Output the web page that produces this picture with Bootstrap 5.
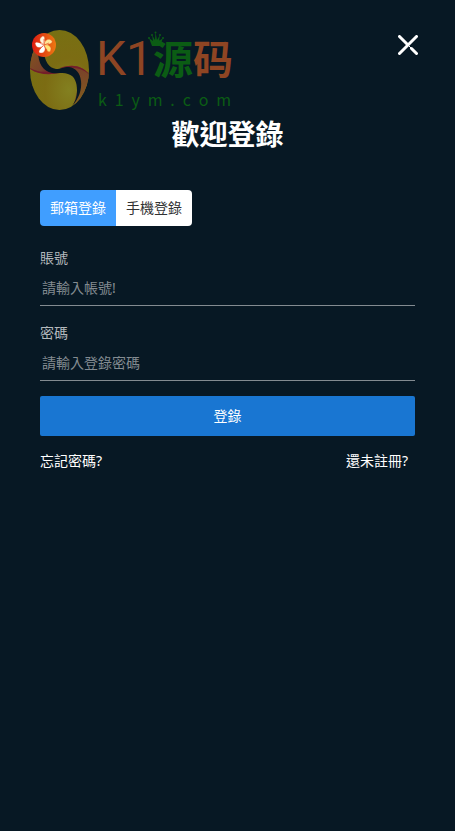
<!DOCTYPE html>
<html lang="zh-Hant">
<head>
<meta charset="utf-8">
<meta name="viewport" content="width=device-width, initial-scale=1">
<title>歡迎登錄</title>
<link href="https://cdn.jsdelivr.net/npm/bootstrap@5.3.0/dist/css/bootstrap.min.css" rel="stylesheet">
<style>
body{background:#071824;color:#fff;font-family:"Noto Sans","Noto Sans CJK TC",sans-serif;font-size:14px;line-height:20px}
.site-head{padding:30px 37px 0 30px}
.brand{width:202px;height:80px}
.egg{width:60px;height:80px}
.brand-text{padding-left:6px}
.brand-main{height:58px;line-height:58px;font-family:"Noto Sans CJK SC",sans-serif;color:#8e4523}
.brand-k{font-family:Roboto,sans-serif;font-weight:400;font-size:48px}
.brand-cn{font-size:40px;line-height:54px;font-weight:700}
.green{color:#0b5c14}
.brand-url{font-family:"Noto Sans CJK SC","DejaVu Sans Mono",monospace;font-size:16px;line-height:22px;color:#0b5c14;padding:0 2px}
.flag{left:2px;top:3px}
.crown{left:118px;top:1px}
.close-x{margin-top:5px;width:20px;height:20px;color:#fff}
.title{font-size:28px;line-height:40px;font-weight:700;margin:4px 0 36px}
.login{padding:0 40px}
.tabs{margin-bottom:22px}
.tabs .btn{font-size:14px;line-height:20px;padding:8px 10px;border:0;border-radius:4px;background:#fff;color:#303133}
.tabs .btn-check:checked+.btn{background:#409eff;color:#fff}
.fields{display:grid;gap:17px;margin-bottom:15px}
.field label{color:#b4b9bd;line-height:20px;margin-bottom:2px}
.field .form-control{background:transparent;border:0;border-bottom:1px solid #838b91;border-radius:0;padding:6px 2px;font-size:14px;line-height:20px;height:36px;min-height:0;color:#fff;box-shadow:none}
.field .form-control::placeholder{color:#838b91}
.submit{height:40px;border:0;border-radius:2px;background:#1976d2;font-size:14px;line-height:20px}
.links{margin-top:15px;padding-right:7px}
</style>
</head>
<body>
<header class="site-head d-flex justify-content-between align-items-start">
  <div class="brand d-flex position-relative">
    <svg class="egg flex-shrink-0" viewBox="0 0 60 80" aria-hidden="true">
      <defs>
        <radialGradient id="gold" cx=".65" cy=".75" r=".8"><stop offset="0" stop-color="#838020"/><stop offset=".5" stop-color="#7c6c13"/><stop offset="1" stop-color="#777012"/></radialGradient>
        <linearGradient id="rustL" x1="0" y1="0" x2="1" y2="1"><stop offset="0" stop-color="#84551e"/><stop offset=".7" stop-color="#78402a"/><stop offset="1" stop-color="#741e2a"/></linearGradient>
        <linearGradient id="rustR" x1="0" y1="0" x2="0" y2="1"><stop offset="0" stop-color="#78402a"/><stop offset="1" stop-color="#85611c"/></linearGradient>
        <clipPath id="shell"><ellipse cx="29.500" cy="40" rx="29.500" ry="40"/></clipPath>
      </defs>
      <g clip-path="url(#shell)">
        <path d="M0 0H60V80H0Z" fill="url(#gold)"/>
        <path d="M0 18H9C9 30 13 37 21 43C12 44 5 43 0 38Z" fill="url(#rustL)"/>
        <path d="M0 38C9 43 16 42 22 41L30 43C20 45 9 45 0 39Z" fill="#741e2a"/>
        <path d="M34 38C44 33 54 37 60 46V64L42 80L50 50Z" fill="url(#rustR)"/>
        <path d="M30 38C43 33 54 37 60 45C53 39 46 37 39 38Z" fill="#741e2a"/>
      </g>
      <path d="M8 20C8 34 13 41 22 43C28 44 33 42 38 44C45 46 47 53 47 60C47 67 45 72 42 76C49 69 52 59 51 51C50 43 46 38 39 37C33 37 31 39 26 39C19 38 14 31 14 20Z" fill="#071824"/>
    </svg>
    <div class="brand-text flex-grow-1">
      <div class="brand-main d-flex">
        <span class="brand-k">K1</span><span class="brand-cn green">源</span><span class="brand-cn">码</span>
      </div>
      <div class="brand-url d-flex justify-content-between"><span>k</span><span>1</span><span>y</span><span>m</span><span>.</span><span>c</span><span>o</span><span>m</span></div>
    </div>
    <svg class="crown position-absolute" width="16" height="16" viewBox="0 0 16 16" fill="#0b5c14" aria-hidden="true"><path d="M1 7L5 10L4 4L7 9L7.500 1L9 9L12 4L11 10L15 7L12 15H4Z"/><circle cx="1" cy="7" r="1"/><circle cx="4" cy="4" r="1"/><circle cx="7.500" cy="1.500" r="1"/><circle cx="12" cy="4" r="1"/><circle cx="15" cy="7" r="1"/></svg>
    <svg class="flag position-absolute" width="24" height="24" viewBox="0 0 24 24" role="img" aria-label="香港">
      <defs>
        <linearGradient id="flagRed"><stop stop-color="#dc1b12"/><stop offset="1" stop-color="#ec7911"/></linearGradient>
        <path id="petal" d="M12 12C8 9 8 4 13 3C16 4 13 8 14 9C14 10 13 11 12 12Z"/>
      </defs>
      <circle cx="12" cy="12" r="12" fill="url(#flagRed)"/>
      <g stroke="#e34a1a" stroke-width=".4" transform="rotate(-14 12 12)">
        <use href="#petal" fill="#fff4dc"/><use href="#petal" fill="#ffe799" transform="rotate(72 12 12)"/><use href="#petal" fill="#ffe47a" transform="rotate(144 12 12)"/><use href="#petal" fill="#fff" transform="rotate(216 12 12)"/><use href="#petal" fill="#fff" transform="rotate(288 12 12)"/>
      </g>
      <path d="M12 11L12 6M12 12L17 10M12 13L15 17M11 13L8 16M11 12L7 9" stroke="#e33d18" stroke-width=".6"/>
    </svg>
  </div>
  <button type="button" class="close-x btn p-0 border-0 d-flex" aria-label="關閉">
    <svg width="20" height="20" viewBox="0 0 20 20" fill="none" stroke="#fff" stroke-width="3" stroke-linecap="round"><path d="M1.500 1.500L9 9M18.500 1.500L1.500 18.500M13.500 13.500L18.500 18.500"/><path d="M9 9L13 13" stroke-width="1"/></svg>
  </button>
</header>
<main>
  <h1 class="title text-center">歡迎登錄</h1>
  <form class="login">
    <div class="tabs btn-group" role="group" aria-label="登錄方式">
      <input type="radio" class="btn-check" name="mode" id="mode-mail" checked><label class="btn ms-0" for="mode-mail">郵箱登錄</label>
      <input type="radio" class="btn-check" name="mode" id="mode-phone"><label class="btn ms-0" for="mode-phone">手機登錄</label>
    </div>
    <div class="fields">
      <div class="field">
        <label class="d-block" for="account">賬號</label>
        <input class="form-control" type="text" id="account" placeholder="請輸入帳號!">
      </div>
      <div class="field">
        <label class="d-block" for="password">密碼</label>
        <input class="form-control" type="password" id="password" placeholder="請輸入登錄密碼">
      </div>
    </div>
    <button type="submit" class="submit btn btn-primary w-100">登錄</button>
    <div class="links d-flex justify-content-between">
      <a class="text-white text-decoration-none" href="#forgot">忘記密碼?</a>
      <a class="text-white text-decoration-none" href="#register">還未註冊?</a>
    </div>
  </form>
</main>
<script src="https://cdn.jsdelivr.net/npm/bootstrap@5.3.0/dist/js/bootstrap.bundle.min.js"></script>
</body>
</html>
